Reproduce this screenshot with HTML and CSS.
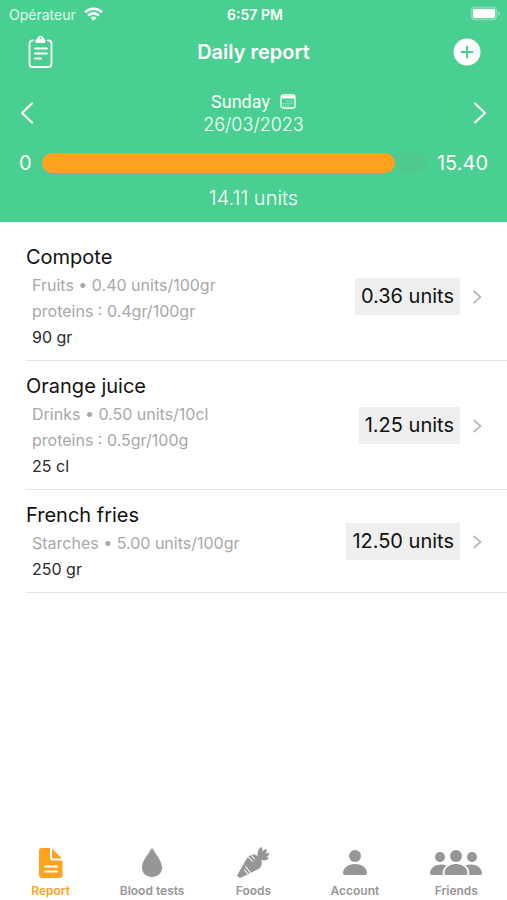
FILE: index.html
```html
<!DOCTYPE html>
<html lang="en">
<head>
    <meta charset="utf-8">
    <title>Daily report</title>
    <meta name="viewport" content="width=device-width, initial-scale=1.0">
    <link rel="stylesheet" href="styles.css">
</head>

<body>
<div class="app">
    <header class="header">
        <!--status bar-->
        <div class="status">
            <div class="carrier">
                <span>Opérateur</span>
                <svg width="19" height="14" viewBox="0 0 19 14" fill="none" stroke="#fff" stroke-width="2.6">
                    <path d="M1 5.2C5.8.6 13.2.6 18 5.2"/>
                    <path d="M4 8.6c3.1-3 7.9-3 11 0"/>
                    <path d="M9.5 13.8l-3-3c1.7-1.6 4.3-1.6 6 0z" fill="#fff" stroke="none"/>
                </svg>
            </div>
            <div class="clock">6:57 PM</div>
            <svg class="battery" width="31" height="16" viewBox="0 0 31 16">
                <rect x="1" y="1" width="26" height="13" rx="4" fill="#fff" fill-opacity=".2" stroke="#fff" stroke-opacity=".25"/>
                <rect x="3" y="3" width="22" height="9" rx="2" fill="#fff"/>
                <path d="M28.5 5.5c2 .8 2 3.2 0 4z" fill="#fff" fill-opacity=".5"/>
            </svg>
        </div>

        <!--title bar-->
        <div class="navbar">
            <button class="icon-button" type="button" aria-label="Reports">
                <svg width="25" height="34" viewBox="0 0 25 34" fill="none" stroke="#fff" stroke-width="1.8" stroke-linecap="round">
                    <path d="M5 5.500H4.500A3 3 0 0 0 1.500 8.500V29a3 3 0 0 0 3 3h16a3 3 0 0 0 3-3V8.500a3 3 0 0 0-3-3H20"/>
                    <path d="M8 7V5.500c0-1 .8-1.300 1.500-1.300.5-4 5.500-4 6 0 .7 0 1.500.3 1.500 1.300V7z" fill="#fff" stroke-width="1"/>
                    <circle cx="12.5" cy="3.3" r=".9" fill="#49cf91" stroke="none"/>
                    <path d="M7 13.500h12M7 18.500h12M7 23.500h6"/>
                </svg>
            </button>
            <h1 class="title">Daily report</h1>
            <button class="icon-button" type="button" aria-label="Add">
                <svg width="28" height="28" viewBox="0 0 28 28">
                    <circle cx="14" cy="14" r="13.5" fill="#fff"/>
                    <path d="M14 8.500v11M8.500 14h11" stroke="#49cf91" stroke-width="2" stroke-linecap="round"/>
                </svg>
            </button>
        </div>

        <!--day picker-->
        <div class="day-picker">
            <button class="icon-button" type="button" aria-label="Previous day">
                <svg width="14" height="24" viewBox="0 0 14 24" fill="none" stroke="#fff" stroke-width="2.2" stroke-linecap="round" stroke-linejoin="round">
                    <path d="M12 2.500L2 12l10 9.500"/>
                </svg>
            </button>
            <button class="date" type="button">
                <span class="weekday">Sunday
                    <svg width="16" height="15" viewBox="0 0 16 15">
                        <rect x="1" y="1" width="14" height="13" rx="2" fill="none" stroke="#fff" stroke-width="1.3"/>
                        <path d="M1 2h14v2.500H1z" fill="#fff"/>
                        <path d="M6.500 7.200h6.500M3 9.500h10M3 11.800h7" stroke="#fff" stroke-opacity=".5" stroke-width="1.3" stroke-dasharray="1.3 1"/>
                    </svg>
                </span>
                <span class="day">26/03/2023</span>
            </button>
            <button class="icon-button" type="button" aria-label="Next day">
                <svg width="14" height="24" viewBox="0 0 14 24" fill="none" stroke="#fff" stroke-width="2.2" stroke-linecap="round" stroke-linejoin="round">
                    <path d="M2 2.500L12 12 2 21.500"/>
                </svg>
            </button>
        </div>

        <!--units used out of the daily maximum-->
        <div class="gauge">
            <span>0</span>
            <div class="track"><div class="fill" style="width: 91.6%"></div></div>
            <span>15.40</span>
        </div>
        <div class="total">14.11 units</div>
    </header>

    <main class="meals">
        <a class="meal" href="#">
            <div class="info">
                <h2>Compote</h2>
                <p>Fruits • 0.40 units/100gr</p>
                <p>proteins : 0.4gr/100gr</p>
                <p class="quantity">90 gr</p>
            </div>
            <span class="units">0.36 units</span>
            <svg class="chevron" width="10" height="16" viewBox="0 0 10 16"><path d="M1.500 2L8.500 8l-7 6"/></svg>
        </a>
        <a class="meal" href="#">
            <div class="info">
                <h2>Orange juice</h2>
                <p>Drinks • 0.50 units/10cl</p>
                <p>proteins : 0.5gr/100g</p>
                <p class="quantity">25 cl</p>
            </div>
            <span class="units">1.25 units</span>
            <svg class="chevron" width="10" height="16" viewBox="0 0 10 16"><path d="M1.500 2L8.500 8l-7 6"/></svg>
        </a>
        <a class="meal" href="#">
            <div class="info">
                <h2>French fries</h2>
                <p>Starches • 5.00 units/100gr</p>
                <p class="quantity">250 gr</p>
            </div>
            <span class="units">12.50 units</span>
            <svg class="chevron" width="10" height="16" viewBox="0 0 10 16"><path d="M1.500 2L8.500 8l-7 6"/></svg>
        </a>
    </main>

    <nav class="tabs">
        <a class="tab active" href="#">
            <svg width="26" height="32" viewBox="0 0 26 32">
                <path d="M4 1h8v9.500a3 3 0 0 0 3 3h9.500V28a3 3 0 0 1-3 3H4a3 3 0 0 1-3-3V4a3 3 0 0 1 3-3z" fill="currentColor"/>
                <path d="M14 1.500L24 11.500H15.500A1.500 1.500 0 0 1 14 10z" fill="currentColor"/>
                <path d="M7 19.500h12M7 24.500h12" stroke="#fff" stroke-width="1.8" stroke-linecap="round"/>
            </svg>
            Report
        </a>
        <a class="tab" href="#">
            <svg width="22" height="32" viewBox="0 0 22 32">
                <path d="M11 1.500c.7 0 1 .5 1.300 1C15.500 8.500 21 14 21 20.500 21 26.500 16.500 30 11 30S1 26.500 1 20.500C1 14 6.500 8.500 9.700 2.500c.3-.5.6-1 1.300-1z" fill="currentColor"/>
            </svg>
            Blood tests
        </a>
        <a class="tab" href="#">
            <svg width="34" height="34" viewBox="0 0 34 34">
                <path d="M1.600 29.500L10.500 14C13 9.500 18 8.200 22.500 11.300c4.700 4.200 4.400 9.700 0 12.600L5.500 32.500c-2.700 1.200-5-1-3.900-3z" fill="currentColor"/>
                <path d="M22 11.500C20.500 6.500 23.500 2.500 25.500 2c1.300 1.800 1.200 3.200.7 5 1-1.800 2.500-2.800 4.300-3 .5 1.700 0 3.200-1 4.500 1.300-.8 2.700-.8 4 0-.5 2-1.800 3-3.500 3.300 1.300.2 2.200.8 2.700 1.700-2.700 2.500-7 2.500-9.500 0z" fill="currentColor"/>
                <path d="M11.500 11l5 5.500M15 10l3.500 4M9.500 21.500l5.500 7M8.500 25l3.500 4" stroke="#fff" stroke-width="1.1" stroke-linecap="round"/>
            </svg>
            Foods
        </a>
        <a class="tab" href="#">
            <svg width="26" height="32" viewBox="0 0 26 32" fill="currentColor">
                <circle cx="13" cy="9" r="6"/>
                <path d="M1 26c0-5 5-9 12-9s12 4 12 9c0 1.300-.8 2-2 2H3c-1.200 0-2-.7-2-2z"/>
            </svg>
            Account
        </a>
        <a class="tab" href="#">
            <svg width="54" height="32" viewBox="0 0 54 32" fill="currentColor">
                <circle cx="27" cy="9" r="6"/>
                <circle cx="11" cy="10" r="5"/>
                <circle cx="43" cy="10" r="5"/>
                <path d="M15.500 26c0-5 4.800-9 11.500-9s11.500 4 11.500 9c0 1.300-.6 2-1.800 2H17.300c-1.200 0-1.800-.7-1.800-2z"/>
                <path d="M17.500 18.700c-7.500-3.200-16 .8-16.500 7.300 0 1.300.6 2 1.800 2h11.400C13 24.500 14.300 21 17.500 18.700z"/>
                <path d="M36.500 18.700c7.500-3.200 16 .8 16.500 7.300 0 1.300-.6 2-1.800 2H39.800c1.200-3.500-.1-7-3.300-9.300z"/>
            </svg>
            Friends
        </a>
    </nav>
</div>
</body>
</html>
```
FILE: styles.css
```css
* {
    box-sizing: border-box;
}
body {
    margin: 0;
    font-family: Inter, "Liberation Sans", sans-serif;
    background: #fff;
    color: #111;
}
h1, h2, p {
    margin: 0;
}
a {
    color: inherit;
    text-decoration: none;
}
svg {
    display: block;
    flex: none;
}
button {
    padding: 0;
    border: 0;
    background: none;
    color: inherit;
    font: inherit;
}
.app {
    display: flex;
    flex-direction: column;
    min-height: 100vh;
}

/* header */
.header {
    background: #49cf91;
    color: #fff;
    padding-bottom: 10px;
}
.status {
    display: grid;
    grid-template-columns: 1fr auto 1fr;
    align-items: center;
    height: 28px;
    padding: 0 6px 0 9px;
    font-size: 14px;
}
.carrier {
    display: flex;
    align-items: center;
    gap: 8px;
    color: #e4f8ee;
}
.clock {
    font-weight: 600;
}
.battery {
    justify-self: end;
}
.navbar {
    display: flex;
    align-items: center;
    justify-content: space-between;
    height: 48px;
    padding: 0 26px;
}
.title {
    font-size: 20px;
    font-weight: 600;
}
.icon-button {
    display: flex;
    justify-content: center;
    min-width: 28px;
}
.day-picker {
    display: flex;
    align-items: center;
    justify-content: space-between;
    height: 74px;
    padding: 0 13px;
}
.date {
    display: flex;
    flex-direction: column;
    align-items: center;
    font-size: 18px;
    line-height: 23px;
}
.weekday {
    display: flex;
    align-items: center;
    gap: 10px;
    font-family: Roboto, sans-serif;
}
.day {
    font-weight: 300;
}
.gauge {
    display: flex;
    align-items: center;
    gap: 10px;
    height: 26px;
    padding: 0 19px;
    font-size: 20px;
}
.track {
    flex: 1;
    height: 20px;
    border-radius: 10px;
    background: #4fc98f;
}
.fill {
    height: 100%;
    border-radius: 10px;
    background: #ffa21f;
}
.total {
    padding-top: 8px;
    font-size: 20px;
    font-weight: 300;
    line-height: 28px;
    text-align: center;
}

/* meals */
.meals {
    flex: 1;
    padding: 10px 0 0 26px;
}
.meal {
    display: flex;
    align-items: center;
    padding: 11px 25px 10px 0;
    border-bottom: 1px solid #e4e4e4;
}
.info {
    flex: 1;
}
.info h2 {
    font-size: 20px;
    font-weight: 400;
    line-height: 29px;
}
.info p {
    padding-left: 6px;
    color: #a8a8a8;
    font-size: 16px;
    line-height: 26px;
}
.info .quantity {
    color: #2a2a2a;
}
.units {
    padding: 0 6px;
    background: #efefef;
    font-size: 20px;
    line-height: 37px;
}
.chevron {
    margin-left: 12px;
    fill: none;
    stroke: #bcbcbc;
    stroke-width: 2;
}

/* tab bar */
.tabs {
    display: grid;
    grid-template-columns: repeat(5, 1fr);
    padding-bottom: 1px;
}
.tab {
    display: flex;
    flex-direction: column;
    align-items: center;
    justify-content: flex-end;
    gap: 4px;
    color: #969696;
    font-size: 12px;
    font-weight: 600;
    line-height: 16px;
}
.active {
    color: #ffa21f;
}
```
